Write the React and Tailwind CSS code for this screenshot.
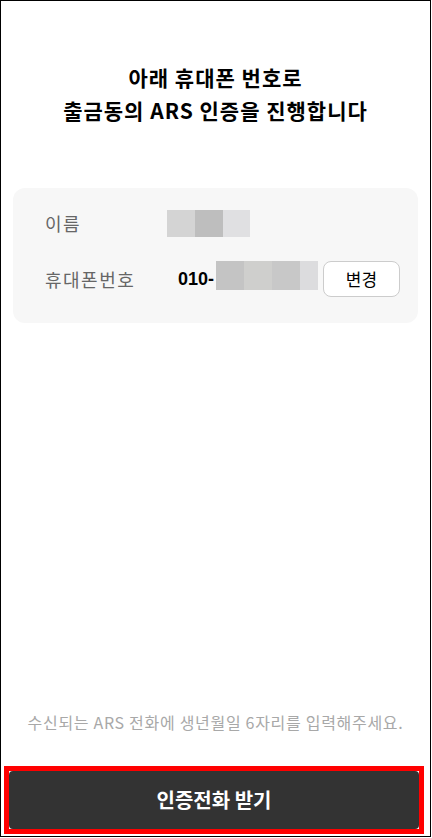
export default function App() {
  return (
    <div className="w-[431px] h-[837px] border border-black bg-white flex flex-col font-['Noto_Sans_CJK_KR','Noto_Sans',sans-serif]">
      <div className="pt-[60px] text-center text-[21px] tracking-[1px] leading-[33px] font-bold text-black">
        <p>아래 휴대폰 번호로</p>
        <p>출금동의 ARS 인증을 진행합니다</p>
      </div>
      <div className="mt-[61px] mx-[12px] rounded-[12px] bg-[#f7f7f7] pl-[32px] pr-[13px] pt-[22px] pb-[26px]">
        <div className="flex items-center h-[27px]">
          <span className="w-[122px] text-[18px] tracking-[1.5px] text-[#666666]">이름</span>
          <div className="flex">
            <div className="w-[28px] h-[27px] bg-[#d4d4d4]" />
            <div className="w-[28px] h-[27px] bg-[#bebebe]" />
            <div className="w-[27px] h-[27px] bg-[#e0e0e2]" />
          </div>
        </div>
        <div className="flex items-center h-[36px] mt-[24px]">
          <span className="w-[133px] text-[18px] tracking-[1.5px] text-[#666666]">휴대폰번호</span>
          <span className="w-[38px] text-[18px] font-bold text-black font-['Liberation_Sans',sans-serif]">010-</span>
          <div className="flex self-start">
            <div className="w-[28px] h-[29px] bg-[#c4c4c4]" />
            <div className="w-[28px] h-[29px] bg-[#cfcfcd]" />
            <div className="w-[28px] h-[29px] bg-[#c8c8c8]" />
            <div className="w-[18px] h-[29px] bg-[#dcdcde]" />
          </div>
          <button className="ml-[5px] w-[77px] h-[36px] rounded-[8px] border border-[#cccccc] bg-white text-[17px] text-black">
            변경
          </button>
        </div>
      </div>
      <div className="flex-1" />
      <p className="text-center text-[16px] tracking-[0.7px] text-[#a8a8a8] leading-[20px]">
        수신되는 ARS 전화에 생년월일 6자리를 입력해주세요.
      </p>
      <div className="mt-[34px] mb-[2px] ml-[3px] w-[420px] h-[68px] border-[5px] border-[#ff0000] bg-white">
        <button className="w-full h-full rounded-[4px] bg-[#333333] text-white text-[20px] font-bold">
          인증전화 받기
        </button>
      </div>
    </div>
  );
}
